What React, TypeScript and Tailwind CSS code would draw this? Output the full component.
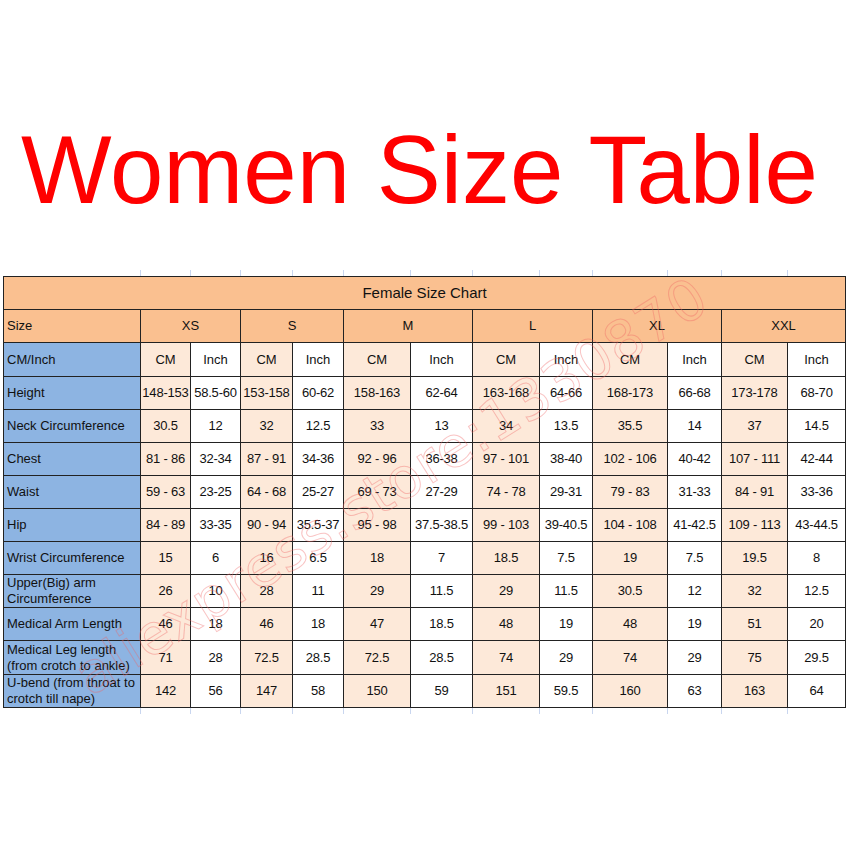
const sizes = ['XS', 'S', 'M', 'L', 'XL', 'XXL'];

const colWidths = [137, 50, 50, 52, 51, 67, 62, 67, 53, 75, 54, 66, 58];

type Row = { label: string[]; values: string[]; tall?: boolean };

const rows: Row[] = [
  { label: ['Height'], values: ['148-153', '58.5-60', '153-158', '60-62', '158-163', '62-64', '163-168', '64-66', '168-173', '66-68', '173-178', '68-70'] },
  { label: ['Neck Circumference'], values: ['30.5', '12', '32', '12.5', '33', '13', '34', '13.5', '35.5', '14', '37', '14.5'] },
  { label: ['Chest'], values: ['81 - 86', '32-34', '87 - 91', '34-36', '92 - 96', '36-38', '97 - 101', '38-40', '102 - 106', '40-42', '107 - 111', '42-44'] },
  { label: ['Waist'], values: ['59 - 63', '23-25', '64 - 68', '25-27', '69 - 73', '27-29', '74 - 78', '29-31', '79 - 83', '31-33', '84 - 91', '33-36'] },
  { label: ['Hip'], values: ['84 - 89', '33-35', '90 - 94', '35.5-37', '95 - 98', '37.5-38.5', '99 - 103', '39-40.5', '104 - 108', '41-42.5', '109 - 113', '43-44.5'] },
  { label: ['Wrist Circumference'], values: ['15', '6', '16', '6.5', '18', '7', '18.5', '7.5', '19', '7.5', '19.5', '8'] },
  { label: ['Upper(Big) arm', 'Circumference'], values: ['26', '10', '28', '11', '29', '11.5', '29', '11.5', '30.5', '12', '32', '12.5'] },
  { label: ['Medical Arm Length'], values: ['46', '18', '46', '18', '47', '18.5', '48', '19', '48', '19', '51', '20'] },
  { label: ['Medical Leg length', '(from crotch to ankle)'], values: ['71', '28', '72.5', '28.5', '72.5', '28.5', '74', '29', '74', '29', '75', '29.5'], tall: true },
  { label: ['U-bend (from throat to', 'crotch till nape)'], values: ['142', '56', '147', '58', '150', '59', '151', '59.5', '160', '63', '163', '64'] },
];

function GridTicks() {
  return (
    <div className="flex h-[6px] ml-[3px]">
      {colWidths.map((w, i) => (
        <div key={i} style={{ width: w }} className={i === 0 ? '' : 'border-l border-[#c9d6ef]'} />
      ))}
    </div>
  );
}

export default function App() {
  return (
    <div className="w-[850px] h-[850px] bg-white overflow-hidden font-['Liberation_Sans',Arial,sans-serif]">
      <div className="pt-[122px] h-[270px]">
        <h1 className="text-[96px] leading-[96px] text-[#ff0000] text-center pr-[11px] whitespace-nowrap">
          Women Size Table
        </h1>
      </div>

      <GridTicks />

      <div className="relative">
        <table className="ml-[3px] table-fixed border-collapse text-[13px] text-[#111] w-[842px]">
          <colgroup>
            {colWidths.map((w, i) => (
              <col key={i} style={{ width: w }} />
            ))}
          </colgroup>
          <tbody>
            <tr className="h-[33px]">
              <td colSpan={13} className="border border-[#222] bg-[#fac090] text-center text-[15px]">
                Female Size Chart
              </td>
            </tr>
            <tr className="h-[33px]">
              <td className="border border-[#222] bg-[#fac090] px-[3px]">Size</td>
              {sizes.map((s) => (
                <td key={s} colSpan={2} className="border border-[#222] bg-[#fac090] text-center">
                  {s}
                </td>
              ))}
            </tr>
            <tr className="h-[34px]">
              <td className="border border-[#222] bg-[#8db4e2] px-[3px]">CM/Inch</td>
              {sizes.flatMap((s) => [
                <td key={s + 'cm'} className="border border-[#222] bg-[#fde9d9] text-center">
                  CM
                </td>,
                <td key={s + 'in'} className="border border-[#222] bg-white text-center">
                  Inch
                </td>,
              ])}
            </tr>
            {rows.map((r) => (
              <tr key={r.label[0]} className={r.tall ? 'h-[34px]' : 'h-[33px]'}>
                <td className="border border-[#222] bg-[#8db4e2] px-[3px] leading-[16px] whitespace-nowrap overflow-hidden">
                  {r.label.map((l) => (
                    <div key={l}>{l}</div>
                  ))}
                </td>
                {r.values.map((v, i) => (
                  <td
                    key={i}
                    className={`border border-[#222] text-center whitespace-nowrap px-0 tracking-[-0.2px] ${
                      i % 2 === 0 ? 'bg-[#fde9d9]' : 'bg-white'
                    }`}
                  >
                    {v}
                  </td>
                ))}
              </tr>
            ))}
          </tbody>
        </table>

        {/* faint shop watermark across the table */}
        <div className="absolute left-[80px] top-[372px] -rotate-[32deg] origin-left whitespace-nowrap text-[56px] leading-[66px] tracking-[1px] font-['DejaVu_Sans',sans-serif] text-transparent [-webkit-text-stroke:1px_rgba(240,100,100,0.38)] pointer-events-none">
          aliexpress.store:1330870
        </div>
      </div>

      <GridTicks />
    </div>
  );
}
